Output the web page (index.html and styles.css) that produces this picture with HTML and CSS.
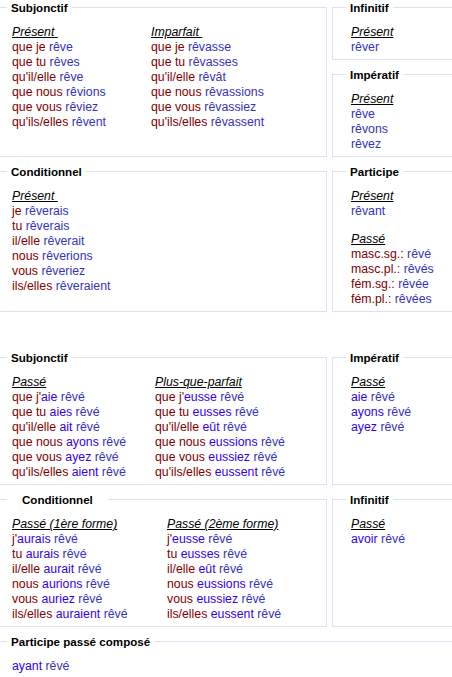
FILE: index.html
```html
<!DOCTYPE html>
<html lang="fr">
<head>
<meta charset="utf-8">
<title>rêver</title>
<link rel="stylesheet" href="styles.css">
</head>
<body>
<div class="page">
  <div class="row">
    <fieldset class="box main">
      <legend>Subjonctif</legend>
      <div class="cols c1">
        <div class="col">
          <div class="t">Présent&nbsp;</div>
          <div><span class="p">que je </span><span class="v">rêve</span></div>
          <div><span class="p">que tu </span><span class="v">rêves</span></div>
          <div><span class="p">qu'il/elle </span><span class="v">rêve</span></div>
          <div><span class="p">que nous </span><span class="v">rêvions</span></div>
          <div><span class="p">que vous </span><span class="v">rêviez</span></div>
          <div><span class="p">qu'ils/elles </span><span class="v">rêvent</span></div>
        </div>
        <div class="col">
          <div class="t">Imparfait&nbsp;</div>
          <div><span class="p">que je </span><span class="v">rêvasse</span></div>
          <div><span class="p">que tu </span><span class="v">rêvasses</span></div>
          <div><span class="p">qu'il/elle </span><span class="v">rêvât</span></div>
          <div><span class="p">que nous </span><span class="v">rêvassions</span></div>
          <div><span class="p">que vous </span><span class="v">rêvassiez</span></div>
          <div><span class="p">qu'ils/elles </span><span class="v">rêvassent</span></div>
        </div>
      </div>
    </fieldset>
    <div class="side">
      <fieldset class="box">
        <legend>Infinitif</legend>
        <div class="inner">
          <div class="t">Présent</div>
          <div class="v">rêver</div>
        </div>
      </fieldset>
      <fieldset class="box grow">
        <legend>Impératif</legend>
        <div class="inner">
          <div class="t">Présent</div>
          <div class="v">rêve</div>
          <div class="v">rêvons</div>
          <div class="v">rêvez</div>
        </div>
      </fieldset>
    </div>
  </div>

  <div class="row">
    <fieldset class="box main">
      <legend>Conditionnel</legend>
      <div class="inner">
        <div class="t">Présent&nbsp;</div>
        <div><span class="p">je </span><span class="v">rêverais</span></div>
        <div><span class="p">tu </span><span class="v">rêverais</span></div>
        <div><span class="p">il/elle </span><span class="v">rêverait</span></div>
        <div><span class="p">nous </span><span class="v">rêverions</span></div>
        <div><span class="p">vous </span><span class="v">rêveriez</span></div>
        <div><span class="p">ils/elles </span><span class="v">rêveraient</span></div>
      </div>
    </fieldset>
    <div class="side">
      <fieldset class="box grow">
        <legend>Participe</legend>
        <div class="inner">
          <div class="t">Présent</div>
          <div class="v">rêvant</div>
          <div class="t gap">Passé</div>
          <div><span class="p">masc.sg.: </span><span class="v">rêvé</span></div>
          <div><span class="p">masc.pl.: </span><span class="v">rêvés</span></div>
          <div><span class="p">fém.sg.: </span><span class="v">rêvée</span></div>
          <div><span class="p">fém.pl.: </span><span class="v">rêvées</span></div>
        </div>
      </fieldset>
    </div>
  </div>

  <div class="row second">
    <fieldset class="box main">
      <legend>Subjonctif</legend>
      <div class="cols c2">
        <div class="col">
          <div class="t">Passé</div>
          <div><span class="p">que j'</span><span class="a">aie</span> <span class="v">rêvé</span></div>
          <div><span class="p">que tu </span><span class="a">aies</span> <span class="v">rêvé</span></div>
          <div><span class="p">qu'il/elle </span><span class="a">ait</span> <span class="v">rêvé</span></div>
          <div><span class="p">que nous </span><span class="a">ayons</span> <span class="v">rêvé</span></div>
          <div><span class="p">que vous </span><span class="a">ayez</span> <span class="v">rêvé</span></div>
          <div><span class="p">qu'ils/elles </span><span class="a">aient</span> <span class="v">rêvé</span></div>
        </div>
        <div class="col">
          <div class="t">Plus-que-parfait</div>
          <div><span class="p">que j'</span><span class="a">eusse</span> <span class="v">rêvé</span></div>
          <div><span class="p">que tu </span><span class="a">eusses</span> <span class="v">rêvé</span></div>
          <div><span class="p">qu'il/elle </span><span class="a">eût</span> <span class="v">rêvé</span></div>
          <div><span class="p">que nous </span><span class="a">eussions</span> <span class="v">rêvé</span></div>
          <div><span class="p">que vous </span><span class="a">eussiez</span> <span class="v">rêvé</span></div>
          <div><span class="p">qu'ils/elles </span><span class="a">eussent</span> <span class="v">rêvé</span></div>
        </div>
      </div>
    </fieldset>
    <div class="side">
      <fieldset class="box grow">
        <legend>Impératif</legend>
        <div class="inner">
          <div class="t">Passé</div>
          <div><span class="a">aie</span> <span class="v">rêvé</span></div>
          <div><span class="a">ayons</span> <span class="v">rêvé</span></div>
          <div><span class="a">ayez</span> <span class="v">rêvé</span></div>
        </div>
      </fieldset>
    </div>
  </div>

  <div class="row">
    <fieldset class="box main">
      <legend class="wide">Conditionnel</legend>
      <div class="cols c3">
        <div class="col">
          <div class="t">Passé (1ère forme)</div>
          <div><span class="p">j'</span><span class="a">aurais</span> <span class="v">rêvé</span></div>
          <div><span class="p">tu </span><span class="a">aurais</span> <span class="v">rêvé</span></div>
          <div><span class="p">il/elle </span><span class="a">aurait</span> <span class="v">rêvé</span></div>
          <div><span class="p">nous </span><span class="a">aurions</span> <span class="v">rêvé</span></div>
          <div><span class="p">vous </span><span class="a">auriez</span> <span class="v">rêvé</span></div>
          <div><span class="p">ils/elles </span><span class="a">auraient</span> <span class="v">rêvé</span></div>
        </div>
        <div class="col">
          <div class="t">Passé (2ème forme)</div>
          <div><span class="p">j'</span><span class="a">eusse</span> <span class="v">rêvé</span></div>
          <div><span class="p">tu </span><span class="a">eusses</span> <span class="v">rêvé</span></div>
          <div><span class="p">il/elle </span><span class="a">eût</span> <span class="v">rêvé</span></div>
          <div><span class="p">nous </span><span class="a">eussions</span> <span class="v">rêvé</span></div>
          <div><span class="p">vous </span><span class="a">eussiez</span> <span class="v">rêvé</span></div>
          <div><span class="p">ils/elles </span><span class="a">eussent</span> <span class="v">rêvé</span></div>
        </div>
      </div>
    </fieldset>
    <div class="side">
      <fieldset class="box grow">
        <legend>Infinitif</legend>
        <div class="inner">
          <div class="t">Passé</div>
          <div><span class="a">avoir</span> <span class="v">rêvé</span></div>
        </div>
      </fieldset>
    </div>
  </div>

  <div class="row">
    <fieldset class="box full">
      <legend>Participe passé composé</legend>
      <div class="inner">
        <div><span class="a">ayant</span> <span class="v">rêvé</span></div>
      </div>
    </fieldset>
  </div>
</div>
</body>
</html>
```

FILE: styles.css
```css
html {
  overflow: hidden;
}
body {
  margin: 0;
  background: #ffffff;
  font-family: "Liberation Sans", Arial, sans-serif;
  font-size: 12.3px;
  line-height: 15px;
  color: #000000;
}
.page {
  margin-left: -7px;
  width: 1000px;
  display: flex;
  flex-direction: column;
  gap: 7px;
}
.row {
  display: flex;
  gap: 5px;
  align-items: stretch;
}
.row.second {
  margin-top: 31px;
}
.side {
  display: flex;
  flex-direction: column;
  gap: 7px;
  width: 334px;
}
.box {
  margin: 0;
  padding: 10px 0 4px 18px;
  border: 1px solid #dde0f3;
  min-width: 0;
  box-sizing: border-box;
}
.box.main {
  width: 334px;
}
.box.full {
  width: 673px;
}
.box.grow {
  flex: 1;
}
.box legend {
  margin-left: -5px;
  padding: 0 4px;
  font-weight: bold;
  font-size: 11.6px;
  line-height: 15px;
}
.box legend.wide {
  padding: 0 15px;
}
.cols {
  display: grid;
}
.c1 { grid-template-columns: 139px auto; }
.c2 { grid-template-columns: 143px auto; }
.c3 { grid-template-columns: 155px auto; }
.t {
  font-style: italic;
  text-decoration: underline;
  white-space: pre;
}
.t.gap {
  margin-top: 13px;
}
.p { color: #800000; }
.v { color: #3333bb; }
.a { color: #3300ee; }
```
